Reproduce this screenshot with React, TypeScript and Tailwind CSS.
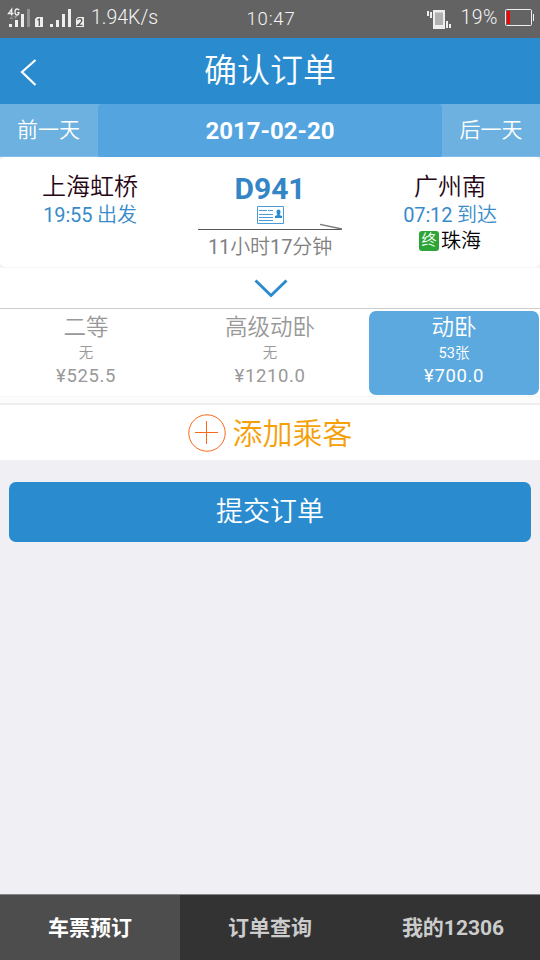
import React from "react";

function SignalIcons() {
  return (
    <svg width="86" height="38" viewBox="0 0 86 38" className="shrink-0">
      <g fill="none" stroke="#eeeeee" strokeWidth="1.3">
        <path d="M11.700 15.500V9.200L8.500 13.500H13.500" />
        <path d="M19.200 10.200Q18.500 9 17 9Q15 9 15 12Q15 15 17 15Q18.800 15 19 12.600H17.200" />
      </g>
      <path d="M9.500 19l2-3 2 3zM13.500 16h4l-2 3z" fill="#929292" />
      <g fill="#eeeeee">
        <path d="M9 24h3v3H9zM15 20h3v7h-3zM21 14h3v13h-3z" />
        <path d="M50 24h3v3h-3zM56 20h3v7h-3zM62 14h3v13h-3zM68 9h3v18h-3z" />
        <path d="M35 19l2-2h6v10h-8zM76 19l2-2h6v10h-8z" />
      </g>
      <path d="M27 9h3v18h-3z" fill="#929292" />
      <g fill="none" stroke="#555555" strokeWidth="1.3">
        <path d="M37.500 20l1.800-1V26" />
        <path d="M77.500 20Q78 18.600 80 18.700Q82 19 81.800 20.600Q81.500 22 77.800 25.300H82.500" />
      </g>
    </svg>
  );
}

function StatusBar() {
  return (
    <div className="grid h-[38px] grid-cols-[230px_80px_230px] bg-[#636363] text-[#f5f5f5]">
      <div className="flex items-center">
        <SignalIcons />
        <span className="ml-[5px] h-[38px] text-[19.5px] leading-[35px] font-light">1.94K/s</span>
      </div>
      <div className="pl-[2px] text-center text-[18.5px] leading-[38px] font-light tracking-[0.8px]">10:47</div>
      <div className="flex items-start justify-end">
        <svg width="26" height="38" viewBox="0 0 26 38">
          <path d="M2 11h2v5H2zM5 12h2v6H5zM8 10h12v19H8zM21 21h2v7h-2zM24 24h2v4h-2z" fill="#eeeeee" />
          <path d="M10 12.500h8v12.500h-8z" fill="#b0b0b0" />
        </svg>
        <span className="ml-[9px] text-[19.5px] leading-[35px] font-light tracking-[0.5px]">19%</span>
        <svg width="36" height="38" viewBox="0 0 36 38" className="ml-[6px]">
          <rect x="1.500" y="9.500" width="26" height="16" rx="1" fill="none" stroke="#eeeeee" />
          <path d="M3 11h3v13H3z" fill="#ff0000" />
          <path d="M29.500 14v7" stroke="#eeeeee" />
        </svg>
      </div>
    </div>
  );
}

function Header() {
  return (
    <header className="grid h-[66px] grid-cols-[60px_1fr_60px] items-center bg-[#2a8ccf] text-white">
      <svg width="60" height="66" viewBox="0 0 60 66" fill="none" stroke="currentColor" strokeWidth="2.2">
        <path d="M35.500 22L22 34l13.500 13" />
      </svg>
      <h1 className="text-center text-[33px] leading-[62px] font-[350]">确认订单</h1>
    </header>
  );
}

function DateBar() {
  return (
    <div className="grid h-[53px] grid-cols-[98px_344px_98px] border-b border-[#7fbce7] bg-[#6db1e0] text-center leading-[50px] text-white">
      <button className="pr-[1px] pb-[2px] text-[21px] font-[350]">前一天</button>
      <div className="rounded-[4px] bg-[#54a5df] text-[24px] leading-[54px] font-bold">2017-02-20</div>
      <button className="pb-[2px] text-[21px] font-[350]">后一天</button>
    </div>
  );
}

function TrainInfo() {
  return (
    <section className="grid h-[110px] grid-cols-[180px_180px_180px] rounded-[5px] bg-white text-center">
      <div className="flex flex-col pt-[15px]">
        <div className="text-[24px] leading-[30px] font-[350] text-[#260615]">上海虹桥</div>
        <div className="text-[20px] leading-[26px] tracking-[-0.15px] text-[#388bca]">19:55 <span className="font-[350]">出发</span></div>
      </div>
      <div className="flex flex-col items-center">
        <div className="mt-[15px] h-[34px] text-[30px] leading-[34px] font-bold text-[#3385c6]">D941</div>
        <svg width="144" height="26" viewBox="0 0 144 26" fill="none" className="shrink-0">
          <path d="M59.500 .5h26v17h-26z" stroke="#4b9cd4" />
          <path d="M61 4.500h8m1 0h5M61 8.500h14M61 11.500h14M61 14.500h14" stroke="#4b9cd4" />
          <path d="M78.500 5.500q0-2 2-2t2 2q0 2.500-1 3.500l2.500 1v2h-7v-2l2.500-1q-1-1-1-3.500z" fill="#2a8ccf" />
          <path d="M0 23.500h144" stroke="#555555" />
          <path d="M122 18.300l22 4.700" stroke="#777777" strokeWidth="1.3" />
        </svg>
        <div className="text-[20px] leading-[30px] tracking-[-0.1px] text-[#808080]">
          11<span className="font-[350]">小时</span>17<span className="font-[350]">分钟</span>
        </div>
      </div>
      <div className="flex flex-col pt-[15px]">
        <div className="text-[24px] leading-[30px] font-[350] text-[#260615]">广州南</div>
        <div className="text-[20px] leading-[26px] tracking-[-0.15px] text-[#388bca]">07:12 <span className="font-[350]">到达</span></div>
        <div className="flex items-center justify-center gap-[2px] text-[20px] leading-[26px] font-[350] text-black">
          <span className="h-5 w-5 rounded-[3px] bg-[#2da536] text-[15px] leading-[18px] text-white">终</span>
          珠海
        </div>
      </div>
    </section>
  );
}

type SeatProps = { name: string; count?: number; price: string; active?: boolean };

function Seat({ name, count, price, active = false }: SeatProps) {
  return (
    <button className={active ? "mt-[2px] mr-[1px] ml-[1px] h-[84px] rounded-[7px] bg-[#5ba9df] pb-[6px] text-white" : "mt-[2px] h-[84px] pr-2 pb-[6px] text-[#999999]"}>
      <div className="text-[22.5px] leading-[31px] font-[350]">{name}</div>
      <div className="text-[14.5px] leading-[22px]">
        {count}
        <span className="font-[350]">{count ? "张" : "无"}</span>
      </div>
      <div className="text-[18.5px] leading-[23px] tracking-[0.6px]">{price}</div>
    </button>
  );
}

export default function App() {
  return (
    <div className="flex h-[960px] w-[540px] flex-col overflow-hidden bg-[#efeff4] font-['Roboto','Noto_Sans_CJK_SC',sans-serif] whitespace-nowrap">
      <StatusBar />
      <Header />
      <DateBar />
      <TrainInfo />
      <div className="flex h-[42px] justify-center border-t border-b border-t-[#f7f7f7] border-b-[#cccccc] bg-white">
        <svg width="34" height="40" viewBox="0 0 34 40" fill="none" stroke="#2a8ccf" strokeWidth="3" className="ml-[2px]">
          <path d="M1.500 12.500l15.500 15L32.500 12.500" />
        </svg>
      </div>
      <div className="grid h-[88px] grid-cols-[180px_188px_172px] border-b border-[#f7f7f7] bg-white">
        <Seat name="二等" price="¥525.5" />
        <Seat name="高级动卧" price="¥1210.0" />
        <Seat name="动卧" count={53} price="¥700.0" active />
      </div>
      <div className="h-[6px] bg-[#fcfcfc]" />
      <button className="flex h-[57px] items-center justify-center gap-[7px] border-t-2 border-[#eeeeee] bg-white">
        <svg width="38" height="38" viewBox="0 0 38 38" fill="none" stroke="#fa691b" className="mt-[1px]">
          <circle cx="19" cy="19" r="18.200" />
          <path d="M7 18.500h23M18.500 7v23" />
        </svg>
        <span className="pt-[2px] text-[30px] leading-[50px] font-[350] text-[#f5a009]">添加乘客</span>
      </button>
      <button className="mx-[9px] mt-[22px] h-[60px] rounded-[7px] bg-[#2a8ccf] text-[27px] leading-[60px] font-[350] text-white">提交订单</button>
      <nav className="mt-auto grid h-[66px] grid-cols-3 border-t border-[#858585] bg-[#333333] text-center text-[21px] leading-[67px] font-bold text-[#cccccc]">
        <button className="bg-[#4d4d4d] text-white">车票预订</button>
        <button>订单查询</button>
        <button className="pl-[6px]">我的12306</button>
      </nav>
    </div>
  );
}
